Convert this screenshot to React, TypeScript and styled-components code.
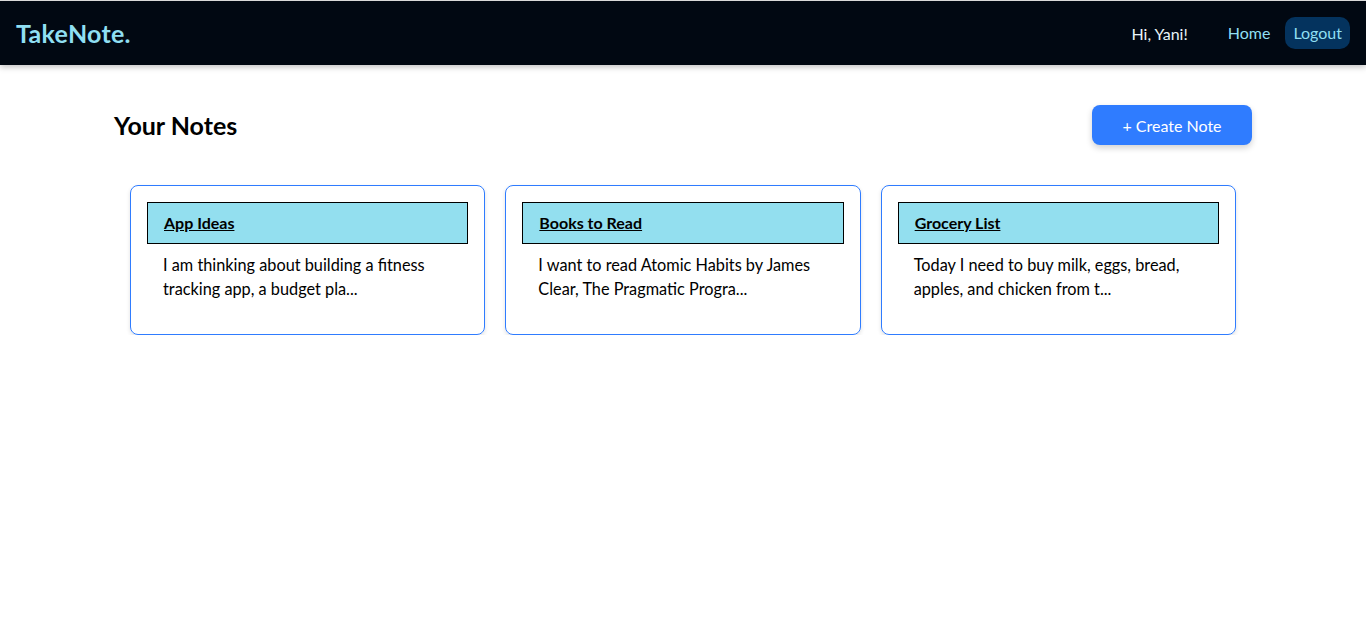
import React from "react";
import styled, { createGlobalStyle } from "styled-components";

const Global = createGlobalStyle`
  * { box-sizing: border-box; }
  body {
    margin: 0;
    background: #ffffff;
    font-family: "Segoe UI", Lato, "Noto Sans", sans-serif;
    color: #000;
  }
`;

const Nav = styled.nav`
  height: 65px;
  background: #010812;
  border-top: 1px solid #d9d9d9;
  display: flex;
  align-items: center;
  justify-content: space-between;
  padding: 0 16px;
  box-shadow: 0 2px 6px rgba(0, 0, 0, 0.25);
`;

const Logo = styled.div`
  color: #8fdff2;
  font-size: 25px;
  font-weight: 700;
  letter-spacing: 0.3px;
`;

const NavRight = styled.div`
  display: flex;
  align-items: center;
`;

const Greeting = styled.span`
  color: #e8f4f8;
  font-size: 16px;
  margin-right: 32px;
`;

const NavLink = styled.a<{ $active?: boolean }>`
  color: #8fdff2;
  font-size: 16px;
  line-height: 20px;
  text-decoration: none;
  padding: 6px 8px;
  border-radius: 10px;
  margin-left: ${(p) => (p.$active ? "7px" : "0")};
  background: ${(p) => (p.$active ? "#04335e" : "transparent")};
`;

const Main = styled.main`
  max-width: 1138px;
  margin: 0 auto;
  padding-top: 40px;
`;

const Header = styled.div`
  display: flex;
  align-items: center;
  justify-content: space-between;
  height: 40px;
`;

const Title = styled.h1`
  margin: 0;
  font-size: 25px;
  font-weight: 700;
`;

const CreateButton = styled.button`
  width: 160px;
  height: 40px;
  border: none;
  border-radius: 8px;
  background: #2f7cff;
  color: #fff;
  font-family: inherit;
  font-size: 16px;
  box-shadow: 0 3px 6px rgba(0, 0, 0, 0.18);
`;

const Grid = styled.div`
  display: grid;
  grid-template-columns: repeat(3, 1fr);
  gap: 20px;
  padding: 40px 16px 0;
`;

const Card = styled.div`
  height: 150px;
  border: 1px solid #2f7cff;
  border-radius: 8px;
  padding: 16px;
  box-shadow: 0 2px 4px rgba(0, 0, 0, 0.12);
`;

const CardHead = styled.div`
  height: 42px;
  background: #93dfef;
  border: 1px solid #000;
  display: flex;
  align-items: center;
  padding: 0 16px 1px;
  font-size: 16px;
  font-weight: 700;
  text-decoration: underline;
`;

const CardBody = styled.p`
  margin: 9px 0 0;
  padding: 0 16px;
  font-size: 16.3px;
  line-height: 24px;
`;

const notes = [
  { title: "App Ideas", body: "I am thinking about building a fitness tracking app, a budget pla..." },
  { title: "Books to Read", body: "I want to read Atomic Habits by James Clear, The Pragmatic Progra..." },
  { title: "Grocery List", body: "Today I need to buy milk, eggs, bread, apples, and chicken from t..." },
];

export default function App() {
  return (
    <>
      <Global />
      <Nav>
        <Logo>TakeNote.</Logo>
        <NavRight>
          <Greeting>Hi, Yani!</Greeting>
          <NavLink>Home</NavLink>
          <NavLink $active>Logout</NavLink>
        </NavRight>
      </Nav>
      <Main>
        <Header>
          <Title>Your Notes</Title>
          <CreateButton>+ Create Note</CreateButton>
        </Header>
        <Grid>
          {notes.map((n) => (
            <Card key={n.title}>
              <CardHead>{n.title}</CardHead>
              <CardBody>{n.body}</CardBody>
            </Card>
          ))}
        </Grid>
      </Main>
    </>
  );
}
